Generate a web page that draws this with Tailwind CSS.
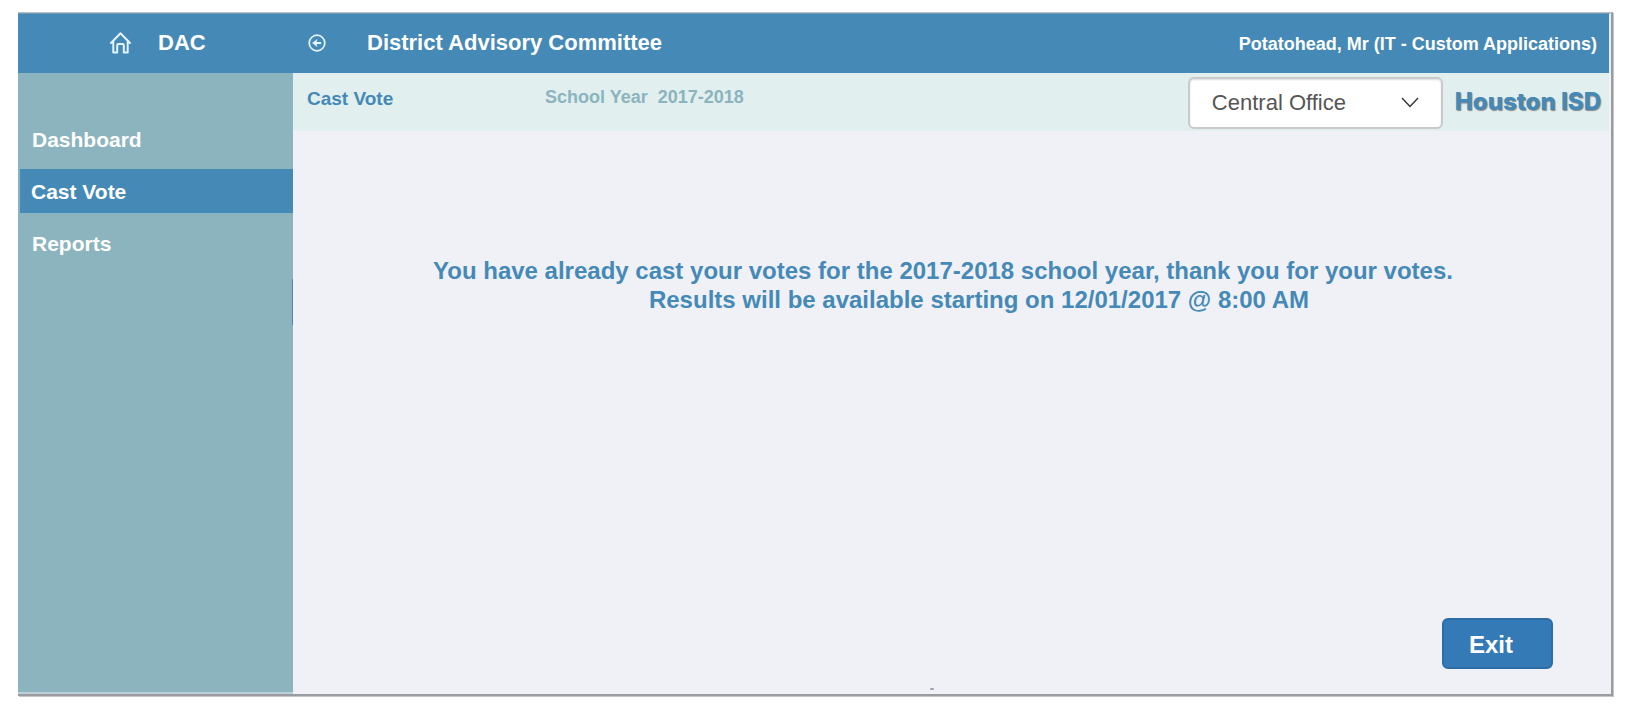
<!DOCTYPE html>
<html lang="en">
<head>
<meta charset="utf-8">
<title>DAC - District Advisory Committee</title>
<script src="https://cdn.jsdelivr.net/npm/@tailwindcss/browser@4"></script>
</head>
<body class="flex min-h-screen bg-white pt-3 pr-[22px] pb-2.5 pl-[18px] font-['Liberation_Sans',Arial,sans-serif]">
<div class="flex flex-1 flex-col border-t border-r-2 border-b-2 border-t-[#b9c0c6] border-r-[#9a9c9f] border-b-[#9a9c9f] shadow-[1px_1px_0_#c4c5c8]">
  <header class="flex h-[60px] items-center border-t border-r-2 border-t-[#6f9ab8] border-r-[#e6edf3] bg-[#4589b6] pr-3 pb-0.5 font-bold text-white">
    <div class="flex w-[275px] items-center gap-[25px] pl-[91px]">
      <a href="#" aria-label="Home"><svg class="size-6" viewBox="0 0 24 24" fill="none" stroke="#e4f4fb" stroke-width="2" stroke-linejoin="round" stroke-linecap="round"><path d="M2 12 11.500 2.300 21 12M4.300 10.500v11h3.900v-7.300q0-1.200 1.200-1.200h4.200q1.200 0 1.200 1.200v7.300h3.900v-11"/></svg></a>
      <span class="text-[22px]">DAC</span>
    </div>
    <div class="flex flex-1 items-center gap-10 pl-[14px]">
      <button type="button" aria-label="Back"><svg class="block size-5" viewBox="0 0 20 20" fill="none" stroke="#e4f4fb" stroke-width="1.700"><circle cx="10" cy="10" r="7.800"/><path d="M7 10h7.200" stroke-width="2"/><path d="M10 6.500 5.500 10l4.500 3.500-1-3.500z" fill="#e4f4fb" stroke-width=".6"/></svg></button>
      <h1 class="text-[22px]">District Advisory Committee</h1>
    </div>
    <span class="pt-0.5 text-lg">Potatohead, Mr (IT - Custom Applications)</span>
  </header>
  <div class="flex flex-1">
    <nav class="relative w-[275px] border-b-2 border-b-[#bdd0da] bg-[#8bb4be] pt-[45px] text-[21px] font-bold text-white">
      <a href="#" class="flex h-11 items-center pl-3.5">Dashboard</a>
      <div class="py-[7px] pl-0.5"><a href="#" aria-current="page" class="flex h-11 items-center bg-[#4589b6] pt-0.5 pl-[11px]">Cast Vote</a></div>
      <a href="#" class="flex h-11 items-center pt-1 pl-3.5">Reports</a>
      <span class="absolute top-[206px] right-0 h-[46px] w-px bg-[#4589b6]"></span>
    </nav>
    <main class="relative flex flex-1 flex-col bg-[#f0f1f7]">
      <div class="mr-0.5 flex h-[58px] items-center bg-[#e1efee] pr-2 text-lg font-bold">
        <h2 class="w-60 pb-1.5 pl-[14px] text-[19px] text-[#4589b6]">Cast Vote</h2>
        <span class="flex-1 pb-2.5 pl-3 whitespace-pre text-[#8bb4be]">School Year  2017-2018</span>
        <div class="relative mt-0.5 mr-3">
          <select aria-label="Office" class="block h-[52px] w-[255px] appearance-none rounded-md border-2 border-[#cacaca] bg-white pl-[22px] text-[22px] font-normal text-[#555] shadow-[inset_0_1px_2px_#ddd]"><option>Central Office</option></select>
          <svg class="pointer-events-none absolute top-5 right-6 h-[11px] w-[18px]" viewBox="0 0 18 11" fill="none" stroke="#333" stroke-width="1.400"><path d="M1 1l8 8.500L17 1"/></svg>
        </div>
        <span class="font-['Inter',sans-serif] text-2xl font-extrabold whitespace-nowrap text-[#4589b6] [text-shadow:1px_1px_1px_#888]">Houston ISD</span>
      </div>
      <div class="flex-1 pt-[125px] pr-[18px] text-center text-2xl leading-[29px] font-bold text-[#4589b6]">
        <p>You have already cast your votes for the 2017-2018 school year, thank you for your votes.</p>
        <p class="pl-[72px]">Results will be available starting on 12/01/2017 @ 8:00 AM</p>
      </div>
      <div class="flex justify-end pr-[58px] pb-[25px]">
        <button type="button" class="h-[51px] w-[111px] rounded-md border-2 border-[#2c6da6] bg-[#347ab7] pt-0.5 pl-[25px] text-left text-2xl font-bold text-white">Exit</button>
      </div>
      <span class="absolute bottom-1 left-[637px] h-0.5 w-1 rounded-full bg-[#9ba5ae]"></span>
    </main>
  </div>
</div>
</body>
</html>
